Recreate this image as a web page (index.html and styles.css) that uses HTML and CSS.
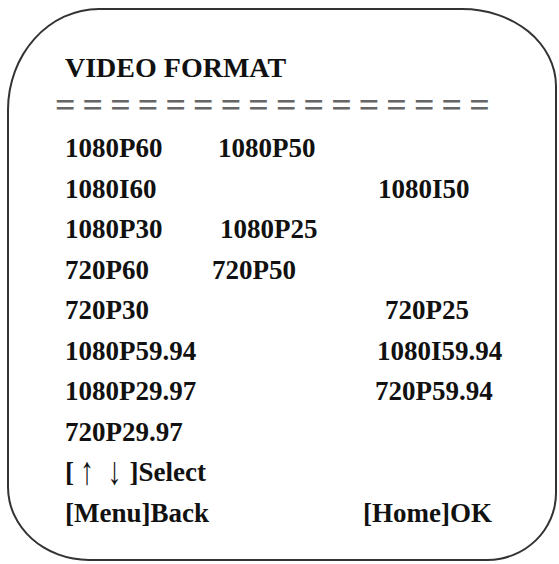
FILE: index.html
```html
<!DOCTYPE html>
<html lang="en">
<head>
<meta charset="utf-8">
<title>VIDEO FORMAT</title>
<link rel="stylesheet" href="styles.css">
</head>
<body>
<div class="panel">
  <div class="title">VIDEO FORMAT</div>
  <div class="sep">================</div>
  <div class="grid">
    <span class="c1">1080P60</span><span class="c2">1080P50</span>
    <span class="c1">1080I60</span><span class="c3">1080I50</span>
    <span class="c1">1080P30</span><span class="c2 n2">1080P25</span>
    <span class="c1">720P60</span><span class="c2 nm6">720P50</span>
    <span class="c1">720P30</span><span class="c3 n7">720P25</span>
    <span class="c1">1080P59.94</span><span class="c3 nm1">1080I59.94</span>
    <span class="c1">1080P29.97</span><span class="c3 nm3">720P59.94</span>
    <span class="c1">720P29.97</span>
    <span class="c1 wide">[<span class="arrows"><span class="ar">↑</span><span class="ar">↓</span></span>]Select</span>
    <span class="c1">[Menu]Back</span><span class="c3 nm15">[Home]OK</span>
  </div>
</div>
</body>
</html>
```

FILE: styles.css
```css
html, body {
  margin: 0;
  padding: 0;
  background: #ffffff;
}

body {
  width: 559px;
  height: 564px;
  overflow: hidden;
  font-family: "Liberation Serif", "Times New Roman", serif;
  color: #111111;
}

.panel {
  box-sizing: border-box;
  width: 550px;
  height: 553px;
  margin: 8px 0 0 7px;
  border: 2px solid #333333;
  border-radius: 92px 95px 70px 82px / 102px 78px 68px 74px;
  padding: 38px 0 0 56px;
}

.title {
  font-size: 28px;
  font-weight: bold;
  line-height: 40.5px;
  height: 40.5px;
}

.sep {
  font-size: 36px;
  font-weight: bold;
  color: #666666;
  letter-spacing: 7.1px;
  line-height: 39.5px;
  height: 39.5px;
  margin-left: -10px;
  overflow: hidden;
  transform: translateY(-3px);
}

.grid {
  display: grid;
  grid-template-columns: 153px 160px 1fr;
  grid-auto-rows: 40.5px;
  font-size: 27px;
  font-weight: bold;
  line-height: 40.5px;
  white-space: nowrap;
}

.c1 { grid-column: 1; }
.c1.wide { grid-column: 1 / 3; }
.c2 { grid-column: 2; }
.c3 { grid-column: 3; }

.n2 { margin-left: 2px; }
.n7 { margin-left: 7px; }
.nm1 { margin-left: -1px; }
.nm3 { margin-left: -3px; }
.nm6 { margin-left: -6px; }
.nm15 { margin-left: -15px; }

.arrows {
  display: inline-flex;
  gap: 13.6px;
  padding: 0 8px 0 6px;
}

.ar {
  display: inline-block;
  font-weight: normal;
  font-size: 28px;
  transform: scaleY(1.4);
}
```
